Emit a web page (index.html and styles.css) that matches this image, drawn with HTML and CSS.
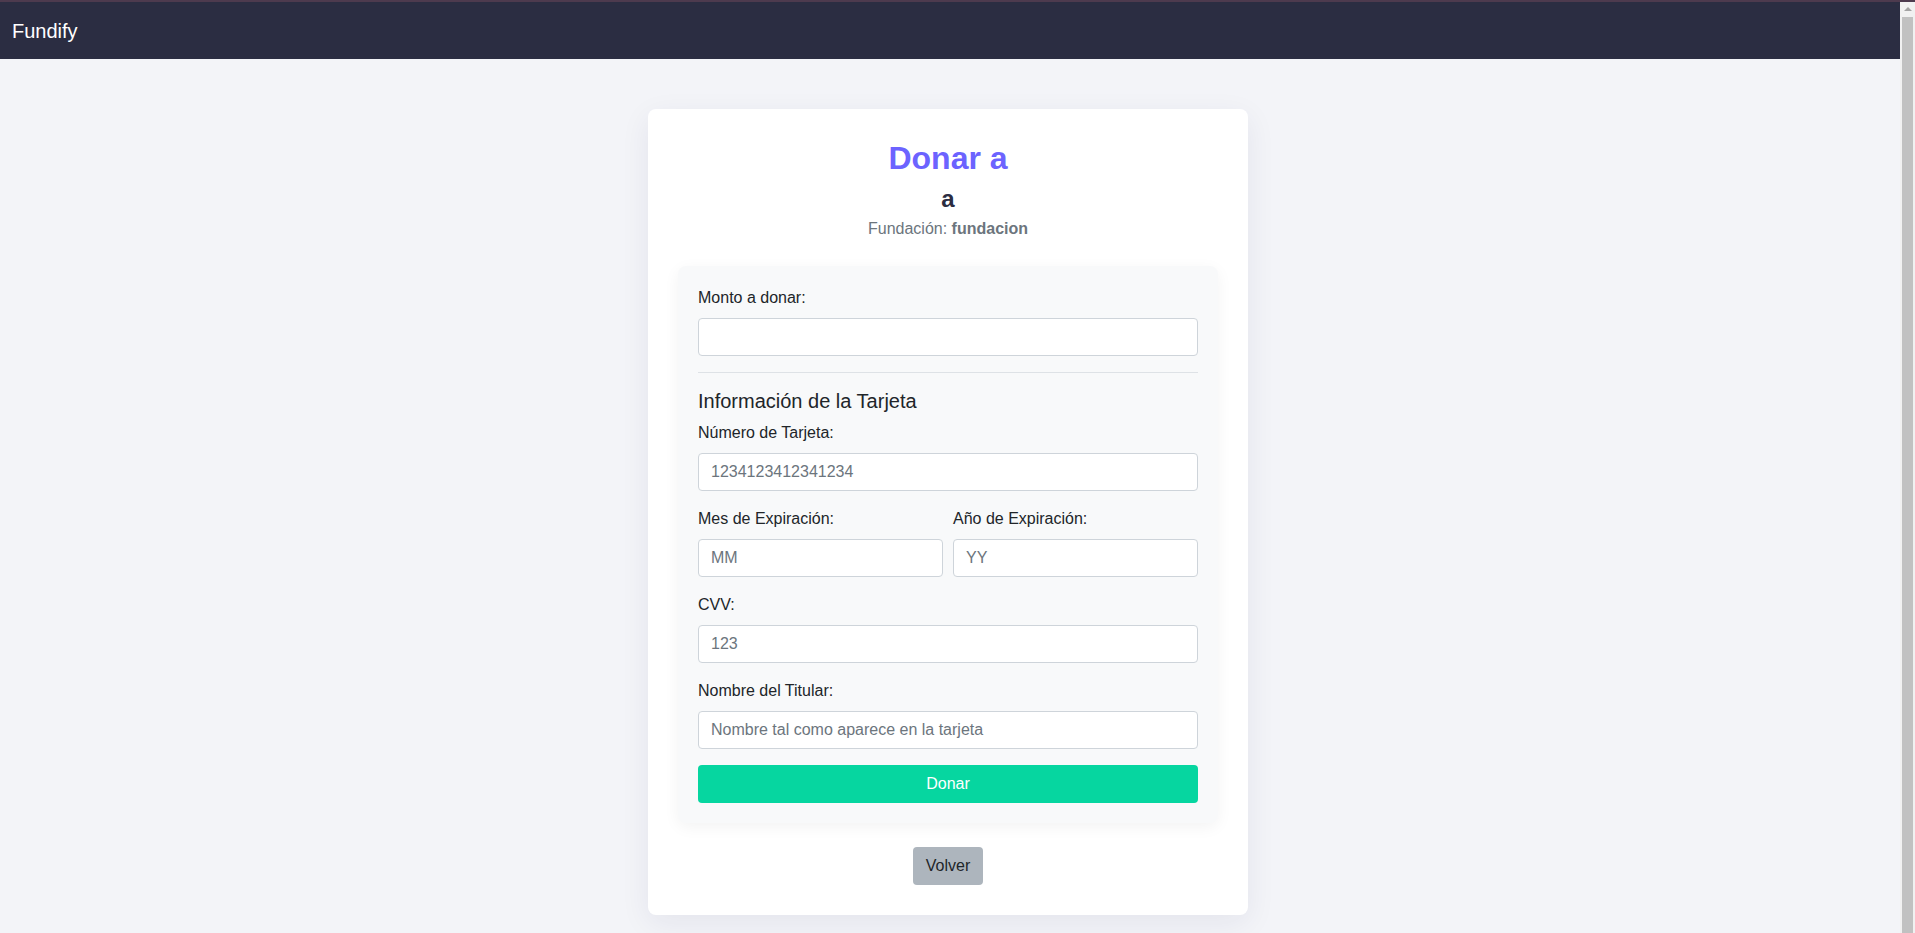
FILE: index.html
```html
<!DOCTYPE html>
<html lang="es">
<head>
<meta charset="utf-8">
<title>Fundify - Donar</title>
<link rel="stylesheet" href="styles.css">
</head>
<body>
<div class="topline"></div>
<nav class="navbar">
  <span class="brand">Fundify</span>
</nav>
<main class="page">
  <section class="card">
    <h2 class="title">Donar a</h2>
    <h3 class="project">a</h3>
    <p class="foundation">Fundación: <strong>fundacion</strong></p>

    <form class="form-box">
      <div class="group">
        <label class="label" for="monto">Monto a donar:</label>
        <input class="input" id="monto" type="text">
      </div>
      <hr class="divider">
      <h4 class="section-title">Información de la Tarjeta</h4>
      <div class="group">
        <label class="label" for="num">Número de Tarjeta:</label>
        <input class="input" id="num" type="text" placeholder="1234123412341234">
      </div>
      <div class="row">
        <div class="group">
          <label class="label" for="mes">Mes de Expiración:</label>
          <input class="input" id="mes" type="text" placeholder="MM">
        </div>
        <div class="group">
          <label class="label" for="anio">Año de Expiración:</label>
          <input class="input" id="anio" type="text" placeholder="YY">
        </div>
      </div>
      <div class="group">
        <label class="label" for="cvv">CVV:</label>
        <input class="input" id="cvv" type="text" placeholder="123">
      </div>
      <div class="group">
        <label class="label" for="titular">Nombre del Titular:</label>
        <input class="input" id="titular" type="text" placeholder="Nombre tal como aparece en la tarjeta">
      </div>
      <button class="btn-donar" type="button">Donar</button>
    </form>

    <div class="back">
      <button class="btn-volver" type="button">Volver</button>
    </div>
  </section>
</main>
<div class="fake-scrollbar" aria-hidden="true">
  <div class="sb-arrow"></div>
  <div class="sb-thumb"></div>
</div>
</body>
</html>
```

FILE: styles.css
```css
* { box-sizing: border-box; }

html, body {
  margin: 0;
  padding: 0;
}

body {
  background: #f3f4f8;
  font-family: "Liberation Sans", Arial, sans-serif;
  color: #212529;
  font-size: 16px;
  line-height: 1.5;
  padding-right: 15px;
}

.topline {
  height: 2px;
  background: #4d3a4e;
  margin-right: -15px;
}

.navbar {
  height: 57px;
  background: #2b2d42;
  display: flex;
  align-items: center;
  padding: 0 12px;
}

.brand {
  color: #ffffff;
  font-size: 20px;
  line-height: 1;
}

.page {
  display: flex;
  justify-content: center;
  padding: 50px 4px 50px 0;
}

.card {
  width: 600px;
  background: #ffffff;
  border-radius: 8px;
  padding: 30px;
  box-shadow: 0 8px 30px rgba(30, 35, 80, 0.07);
  text-align: center;
}

.title {
  margin: 1px 0 8px;
  font-size: 32px;
  line-height: 37px;
  font-weight: 700;
  color: #6c63ff;
}

.project {
  margin: 0 0 6px;
  font-size: 24px;
  line-height: 28px;
  font-weight: 700;
  color: #2b2d42;
}

.foundation {
  margin: 0 0 28px;
  font-size: 16px;
  line-height: 19px;
  color: #6c757d;
}

.form-box {
  text-align: left;
  background: #f8f9fa;
  border-radius: 8px;
  padding: 20px;
  box-shadow: 0 4px 16px rgba(0, 0, 0, 0.05);
}

.group {
  margin-bottom: 16px;
  min-width: 0;
}

.label {
  display: block;
  margin-bottom: 8px;
  font-size: 16px;
  line-height: 24px;
  color: #212529;
}

.input {
  display: block;
  width: 100%;
  height: 38px;
  padding: 6px 12px;
  font-family: inherit;
  font-size: 16px;
  line-height: 24px;
  color: #495057;
  background: #ffffff;
  border: 1px solid #ced4da;
  border-radius: 4px;
}

.input::placeholder {
  color: #6c757d;
  opacity: 1;
}

.divider {
  margin: 16px 0;
  border: 0;
  border-top: 1px solid #dee2e6;
}

.section-title {
  margin: 0 0 8px;
  font-size: 20px;
  line-height: 24px;
  font-weight: 400;
  color: #212529;
}

.row {
  display: grid;
  grid-template-columns: 1fr 1fr;
  column-gap: 10px;
}

.btn-donar {
  display: block;
  width: 100%;
  height: 38px;
  border: 0;
  border-radius: 4px;
  background: #06d6a0;
  color: #ffffff;
  font-family: inherit;
  font-size: 16px;
  line-height: 24px;
}

.back {
  margin-top: 24px;
  display: flex;
  justify-content: center;
}

.btn-volver {
  height: 38px;
  min-width: 70px;
  padding: 0 12px;
  border: 0;
  border-radius: 4px;
  background: #adb5bd;
  color: #212529;
  font-family: inherit;
  font-size: 16px;
  line-height: 24px;
}

/* browser scrollbar as seen in the capture */
.fake-scrollbar {
  position: fixed;
  top: 2px;
  right: 0;
  bottom: 0;
  width: 15px;
  background: #f1f1f1;
  display: flex;
  flex-direction: column;
  align-items: center;
}

.sb-arrow {
  margin-top: 5px;
  width: 0;
  height: 0;
  border-left: 4px solid transparent;
  border-right: 4px solid transparent;
  border-bottom: 4px solid #a3a3a3;
}

.sb-thumb {
  margin-top: 6px;
  flex: 1;
  width: 11px;
  background: #c1c1c1;
}
```
